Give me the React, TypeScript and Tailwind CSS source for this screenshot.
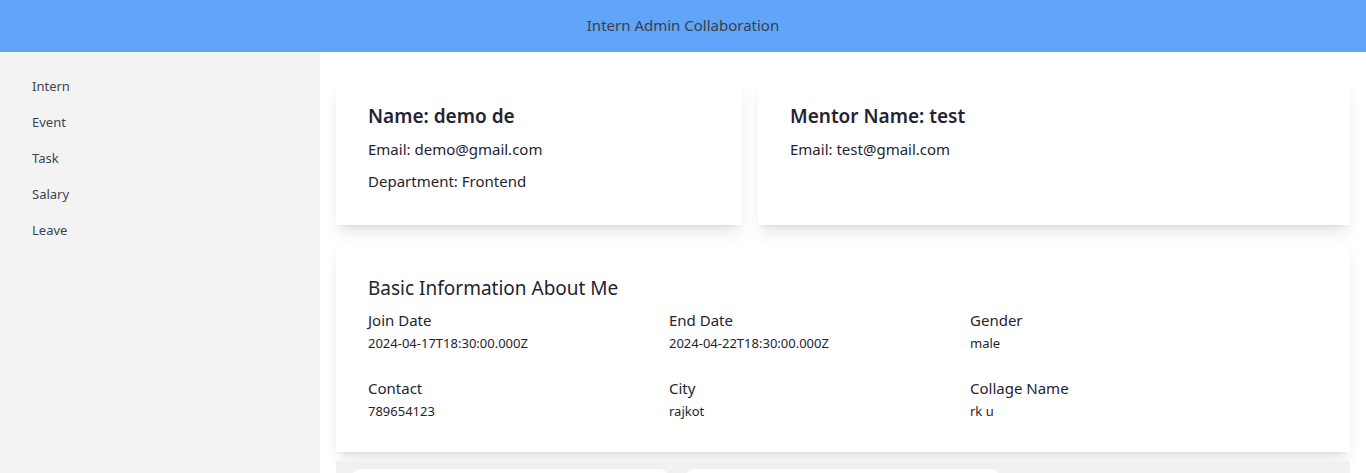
const font = { fontFamily: '"Noto Sans", "Open Sans", sans-serif' };

const navItems = ["Intern", "Event", "Task", "Salary", "Leave"];

const basicInfo = [
  { label: "Join Date", value: "2024-04-17T18:30:00.000Z" },
  { label: "End Date", value: "2024-04-22T18:30:00.000Z" },
  { label: "Gender", value: "male" },
  { label: "Contact", value: "789654123" },
  { label: "City", value: "rajkot" },
  { label: "Collage Name", value: "rk u" },
];

export default function App() {
  return (
    <div className="h-[473px] overflow-hidden bg-white text-[#1f2430]" style={font}>
      <header className="h-[52px] bg-[#60a5fa] flex items-center justify-center pb-[2px]">
        <h1 className="text-[15px] text-[#3a3f47]">Intern Admin Collaboration</h1>
      </header>
      <div className="flex h-[421px]">
        <aside className="w-[320px] shrink-0 bg-[#f3f3f3] pt-[17px] pl-8">
          <ul className="flex flex-col">
            {navItems.map((item) => (
              <li key={item} className="h-9 flex items-center text-[13px] text-[#3d4350]">
                {item}
              </li>
            ))}
          </ul>
        </aside>
        <main className="flex-1 pt-7 px-4">
          <div className="flex gap-4">
            <div className="w-[406px] h-[145px] bg-white shadow-lg px-8 pt-[22px]">
              <h2 className="text-[19px] font-semibold leading-7 mb-[3px]">Name: demo de</h2>
              <p className="text-[15px] leading-8">Email: demo@gmail.com</p>
              <p className="text-[15px] leading-8">Department: Frontend</p>
            </div>
            <div className="flex-1 h-[145px] bg-white shadow-lg px-8 pt-[22px]">
              <h2 className="text-[19px] font-semibold leading-7 mb-[3px]">Mentor Name: test</h2>
              <p className="text-[15px] leading-8">Email: test@gmail.com</p>
            </div>
          </div>
          <div className="mt-4 h-[211px] bg-white shadow-lg px-8 pt-[35px]">
            <h3 className="text-[19px] leading-6 mb-[8px]">Basic Information About Me</h3>
            <div className="grid grid-cols-[301px_301px_301px] gap-y-[22px]">
              {basicInfo.map((info) => (
                <div key={info.label}>
                  <div className="text-[15px] leading-6">{info.label}</div>
                  <div className="text-[13px] leading-[22px]">{info.value}</div>
                </div>
              ))}
            </div>
          </div>
          <div className="mt-[9px] bg-[#f1f1f1] px-4 pt-2 flex gap-[18px] h-[40px]">
            <div className="w-[316px] bg-white rounded-lg" />
            <div className="w-[313px] bg-white rounded-lg" />
          </div>
        </main>
      </div>
    </div>
  );
}
